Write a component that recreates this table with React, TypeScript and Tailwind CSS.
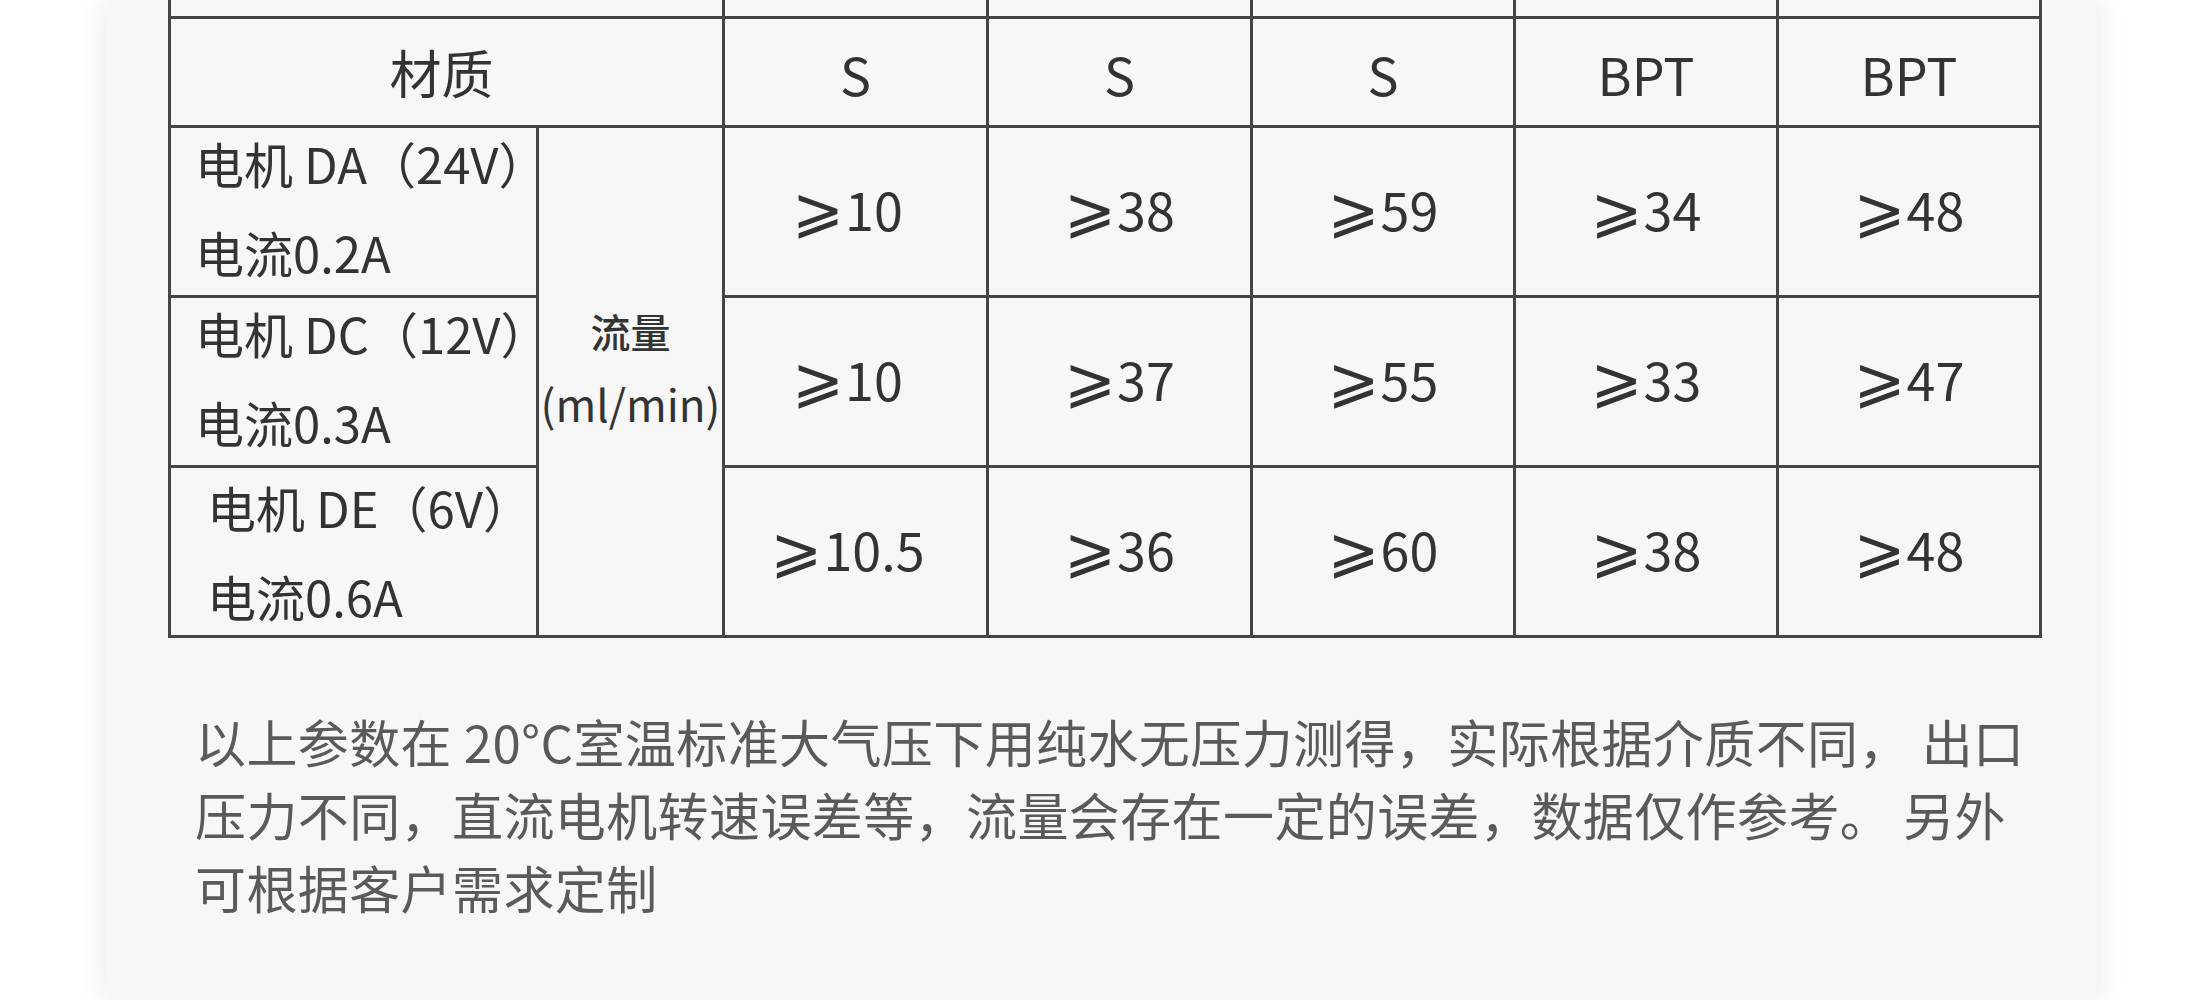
const headers = ["S", "S", "S", "BPT", "BPT"]

const rows = [
  { motor: "电机 DA（24V）", current: "电流0.2A", pad: "pl-[24px] pb-[8px]", values: ["10", "38", "59", "34", "48"] },
  { motor: "电机 DC（12V）", current: "电流0.3A", pad: "pl-[24px] pb-[8px]", values: ["10", "37", "55", "33", "47"] },
  { motor: "电机 DE（6V）", current: "电流0.6A", pad: "pl-[36px]", values: ["10.5", "36", "60", "38", "48"] },
]

const cell = "border-[3px] border-[#454545] p-0 text-center align-middle"

export default function App() {
  return (
    <div className="min-h-screen bg-white font-['Noto_Sans_CJK_SC','DejaVu_Sans',sans-serif]">
      <div className="ml-[107px] h-[1000px] w-[1990px] overflow-hidden bg-[#f7f7f7] shadow-[0_0_28px_rgba(0,0,0,0.1)]">
        <div className="pl-[61px]">
          {/* spec table */}
          <table className="w-[1871px] table-fixed border-collapse text-[#333]">
            <colgroup>
              <col className="w-[368px]" />
              <col className="w-[186px]" />
              <col className="w-[264px]" />
              <col className="w-[264px]" />
              <col className="w-[263px]" />
              <col className="w-[263px]" />
              <col className="w-[263px]" />
            </colgroup>
            <tbody>
              <tr className="h-[17px]">
                <td colSpan={2} className={`${cell} border-t-0`} />
                {headers.map((_, i) => (
                  <td key={i} className={`${cell} border-t-0`} />
                ))}
              </tr>
              <tr className="h-[109px]">
                <td colSpan={2} className={`${cell} pr-[10px] text-[52px]`}>材质</td>
                {headers.map((h, i) => (
                  <td key={i} className={`${cell} pt-[4px] text-[52px]`}>{h}</td>
                ))}
              </tr>
              {rows.map((r, ri) => (
                <tr key={ri} className="h-[170px]">
                  <td className={`${cell} text-left ${r.pad}`}>
                    <div className="flex flex-col gap-[29px] whitespace-nowrap text-[49px] leading-[60px]">
                      <div>{r.motor}</div>
                      <div>{r.current}</div>
                    </div>
                  </td>
                  {ri === 0 && (
                    <td rowSpan={3} className={`${cell} pb-[28px]`}>
                      <div className="text-[40px] font-medium leading-[72px]">流量</div>
                      <div className="text-[44px] leading-[72px]">(ml/min)</div>
                    </td>
                  )}
                  {r.values.map((v, vi) => (
                    <td
                      key={vi}
                      className={`${cell} pb-[9px] text-[52px] leading-[60px] ${vi === 0 ? "pr-[16px]" : ""}`}
                    >
                      <span className="mr-[1px] text-[62px] leading-[60px]">⩾</span>
                      {v}
                    </td>
                  ))}
                </tr>
              ))}
            </tbody>
          </table>

          <p className="mt-[67px] pl-[27px] text-[51px] leading-[73px] tracking-[0.4px] text-[#5a5a5a]">
            以上参数在 20°C室温标准大气压下用纯水无压力测得，实际根据介质不同， 出口
            <br />
            压力不同，直流电机转速误差等，流量会存在一定的误差，数据仅作参考。 另外
            <br />
            可根据客户需求定制
          </p>
        </div>
      </div>
    </div>
  )
}
